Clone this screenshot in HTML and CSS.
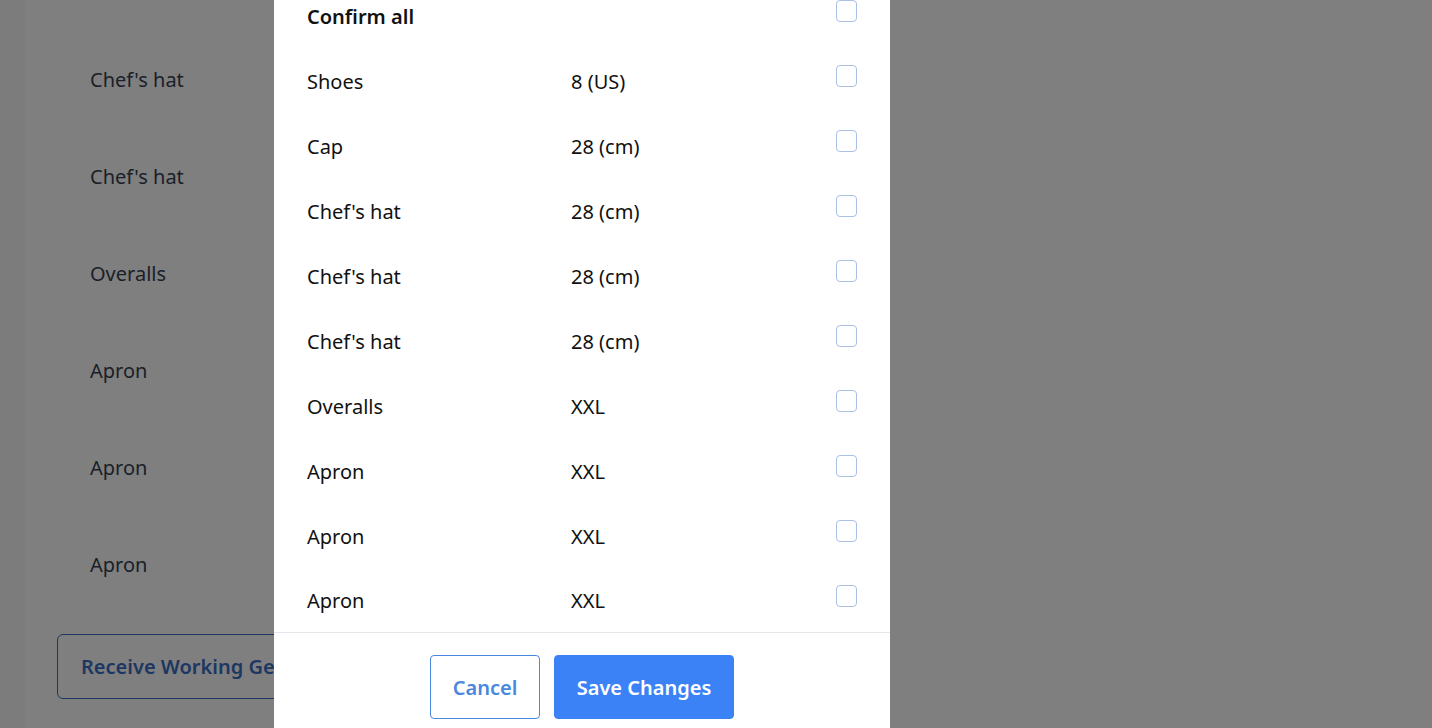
FILE: index.html
```html
<!DOCTYPE html>
<html lang="en">
<head>
<meta charset="utf-8">
<title>Receive Working Gear</title>
<link rel="stylesheet" href="styles.css">
</head>
<body>
<div class="page">
  <div class="strip"></div>
  <main class="content">
    <ul class="gear-list">
      <li>Chef's hat</li>
      <li>Chef's hat</li>
      <li>Overalls</li>
      <li>Apron</li>
      <li>Apron</li>
      <li>Apron</li>
    </ul>
    <button class="receive-btn">Receive Working Gear</button>
  </main>
</div>

<div class="overlay"></div>

<div class="modal">
  <div class="modal-body">
    <div class="row head">
      <span class="name">Confirm all</span>
      <span class="size"></span>
      <span class="check"></span>
    </div>
    <div class="row"><span class="name">Shoes</span><span class="size">8 (US)</span><span class="check"></span></div>
    <div class="row"><span class="name">Cap</span><span class="size">28 (cm)</span><span class="check"></span></div>
    <div class="row"><span class="name">Chef's hat</span><span class="size">28 (cm)</span><span class="check"></span></div>
    <div class="row"><span class="name">Chef's hat</span><span class="size">28 (cm)</span><span class="check"></span></div>
    <div class="row"><span class="name">Chef's hat</span><span class="size">28 (cm)</span><span class="check"></span></div>
    <div class="row"><span class="name">Overalls</span><span class="size">XXL</span><span class="check"></span></div>
    <div class="row"><span class="name">Apron</span><span class="size">XXL</span><span class="check"></span></div>
    <div class="row"><span class="name">Apron</span><span class="size">XXL</span><span class="check"></span></div>
    <div class="row"><span class="name">Apron</span><span class="size">XXL</span><span class="check"></span></div>
  </div>
  <div class="modal-footer">
    <button class="btn btn-outline">Cancel</button>
    <button class="btn btn-primary">Save Changes</button>
  </div>
</div>
</body>
</html>
```
FILE: styles.css
```css
* { box-sizing: border-box; }
html, body {
  margin: 0;
  padding: 0;
  height: 100%;
  overflow: hidden;
}
body {
  font-family: "Noto Sans", "Open Sans", sans-serif;
  font-size: 20px;
  color: #374151;
  background: #ffffff;
}
.page {
  display: flex;
  height: 100%;
}
.strip {
  width: 25px;
  flex: none;
  background: #f8f8f8;
}
.content {
  flex: 1;
  padding-left: 32px;
}
.gear-list {
  list-style: none;
  margin: 0;
  padding: 0 0 0 33px;
  margin-top: 31px;
}
.gear-list li {
  height: 97px;
  line-height: 97px;
}
.receive-btn {
  display: block;
  margin-top: 21px;
  height: 65px;
  width: 320px;
  text-align: left;
  padding: 0 23px;
  font-family: inherit;
  font-size: 20px;
  font-weight: 600;
  color: #3b6fc4;
  background: transparent;
  border: 1px solid #3b6fc4;
  border-radius: 6px;
  white-space: nowrap;
}
.overlay {
  position: fixed;
  inset: 0;
  background: rgba(0, 0, 0, 0.5);
}
.modal {
  position: fixed;
  top: 0;
  left: 274px;
  width: 616px;
  height: 100%;
  background: #ffffff;
  color: #111111;
  display: flex;
  flex-direction: column;
  overflow: hidden;
}
.modal-body {
  margin-top: -16px;
  padding: 0 33px;
}
.row {
  display: grid;
  grid-template-columns: 264px 1fr 21px;
  height: 65px;
  align-items: center;
}
.row:last-child {
  height: 63px;
}
.name, .size {
  line-height: 24px;
}
.head .name {
  font-weight: 600;
}
.check {
  align-self: start;
  margin-top: 16px;
  width: 21px;
  height: 22px;
  border: 1px solid #a9bfe6;
  border-radius: 4px;
  background: #ffffff;
}
.modal-footer {
  border-top: 1px solid #e5e7eb;
  display: flex;
  justify-content: center;
  gap: 14px;
  padding-top: 22px;
}
.btn {
  height: 64px;
  font-family: inherit;
  font-size: 20px;
  font-weight: 600;
  border-radius: 4px;
  padding: 0;
  white-space: nowrap;
  cursor: pointer;
}
.btn-outline {
  width: 110px;
  background: #ffffff;
  color: #4a88e0;
  border: 1px solid #4a88e0;
}
.btn-primary {
  width: 180px;
  background: #3b82f6;
  color: #ffffff;
  border: 1px solid #3b82f6;
}
```
